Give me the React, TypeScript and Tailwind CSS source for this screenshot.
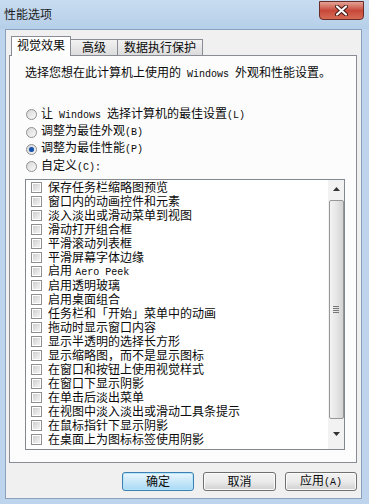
import React from "react";

const cjk = { fontFamily: '"Liberation Sans", "Noto Sans CJK SC", sans-serif' };

// half-width latin, like SimSun's ascii
function L({ children }: { children: React.ReactNode }) {
  return (
    <span className="text-[10px]" style={{ fontFamily: '"Liberation Mono", monospace' }}>
      {children}
    </span>
  );
}

const effects: React.ReactNode[] = [
  "保存任务栏缩略图预览",
  "窗口内的动画控件和元素",
  "淡入淡出或滑动菜单到视图",
  "滑动打开组合框",
  "平滑滚动列表框",
  "平滑屏幕字体边缘",
  <>启用 <L>Aero Peek</L></>,
  "启用透明玻璃",
  "启用桌面组合",
  "任务栏和「开始」菜单中的动画",
  "拖动时显示窗口内容",
  "显示半透明的选择长方形",
  "显示缩略图，而不是显示图标",
  "在窗口和按钮上使用视觉样式",
  "在窗口下显示阴影",
  "在单击后淡出菜单",
  "在视图中淡入淡出或滑动工具条提示",
  "在鼠标指针下显示阴影",
  "在桌面上为图标标签使用阴影",
];

function Radio({ checked, children }: { checked?: boolean; children: React.ReactNode }) {
  return (
    <div className="flex items-center h-[17.4px] gap-[4px]">
      <span className="w-[11px] h-[11px] rounded-full border border-[#8e8f8f] bg-gradient-to-br from-[#d6d6d6] to-[#fbfbfb] flex items-center justify-center">
        {checked && <span className="w-[5px] h-[5px] rounded-full bg-[#1a52a8] shadow-[0_0_1px_#7ab8ef]" />}
      </span>
      <span className="text-[12px] leading-[14px] text-[#0a0a0a]">{children}</span>
    </div>
  );
}

export default function App() {
  return (
    <div className="w-[369px] h-[504px] bg-[#bdd4ec] flex flex-col overflow-hidden" style={cjk}>
      {/* title bar */}
      <div className="h-[29px] flex items-start justify-between pl-[4px] pr-[5px] bg-gradient-to-b from-[#c8dcf0] to-[#b6cfe9]">
        <span className="mt-[8px] text-[12px] leading-[14px] text-[#1b1b1b]">性能选项</span>
        <div className="w-[45px] h-[19px] mt-[1px] rounded-b-[4px] border border-[#6b2b26] bg-gradient-to-b from-[#e3a296] via-[#c7483a] to-[#d66b55] flex items-center justify-center">
          <svg width="13" height="11" viewBox="0 0 13 11">
            <path d="M2 1.5 L11 9.5 M11 1.5 L2 9.5" stroke="#3b1410" strokeWidth="4" strokeLinecap="round" />
            <path d="M2 1.5 L11 9.5 M11 1.5 L2 9.5" stroke="#fff" strokeWidth="2.2" strokeLinecap="round" />
          </svg>
        </div>
      </div>

      {/* client */}
      <div className="flex-1 ml-[5px] mr-[7px] mb-[5px] bg-[#f0f0f0] border border-[#8aa2bf] flex flex-col pl-[3px] pt-[6px]">
        {/* tabs */}
        <div className="flex items-end h-[20px] pl-[2px] relative z-10">
          <div className="w-[60px] h-[20px] border border-[#898c95] border-b-0 bg-white flex items-center justify-center text-[12px] text-[#0a0a0a] pb-[1px]">
            视觉效果
          </div>
          <div className="w-[47px] h-[17px] border border-[#898c95] border-l-0 bg-gradient-to-b from-[#f2f2f2] to-[#dcdcdc] flex items-center justify-center text-[12px] text-[#0a0a0a]">
            高级
          </div>
          <div className="w-[85px] h-[17px] border border-[#898c95] border-l-0 bg-gradient-to-b from-[#f2f2f2] to-[#dcdcdc] flex items-center justify-center text-[12px] text-[#0a0a0a]">
            数据执行保护
          </div>
        </div>

        {/* panel */}
        <div className="w-[348px] h-[408px] -mt-px border border-[#898c95] bg-[#fcfcfc] pl-[15px] pt-[10px] flex flex-col">
          <div className="text-[12px] leading-[14px] text-[#0a0a0a] whitespace-nowrap">
            选择您想在此计算机上使用的<L> Windows </L>外观和性能设置。
          </div>

          <div className="mt-[24px] pl-[1px] flex flex-col">
            <Radio>让<L> Windows </L>选择计算机的最佳设置<L>(L)</L></Radio>
            <Radio>调整为最佳外观<L>(B)</L></Radio>
            <Radio checked>调整为最佳性能<L>(P)</L></Radio>
            <Radio>自定义<L>(C):</L></Radio>
          </div>

          {/* list */}
          <div className="mt-[3px] w-[320px] h-[271px] border border-[#828790] bg-white flex">
            <div className="flex-1 flex flex-col pt-[1px] pl-[5px]">
              {effects.map((e, i) => (
                <div key={i} className="h-[14px] flex items-center gap-[6px]">
                  <span className="w-[11px] h-[11px] border border-[#8f8f8f] p-[1px] bg-white">
                    <span className="block w-full h-full bg-gradient-to-br from-[#cfcfcf] to-[#f4f4f4]" />
                  </span>
                  <span className="text-[12px] leading-[14px] text-[#0a0a0a] whitespace-nowrap">{e}</span>
                </div>
              ))}
            </div>
            {/* scrollbar */}
            <div className="w-[16px] bg-[#f2f2f2] flex flex-col items-center">
              <div className="h-[18px] w-full flex items-center justify-center">
                <svg width="7" height="4" viewBox="0 0 7 4"><path d="M0 4 L3.5 0 L7 4 Z" fill="#333" /></svg>
              </div>
              <div className="w-[15px] h-[219px] mt-[2px] rounded-[2px] border border-[#979797] bg-gradient-to-r from-[#f3f3f3] via-[#e6e6e6] to-[#d3d3d3] flex items-center justify-center">
                <div className="flex flex-col gap-[1px]">
                  <span className="block w-[6px] h-px bg-[#777]" />
                  <span className="block w-[6px] h-px bg-[#777]" />
                  <span className="block w-[6px] h-px bg-[#777]" />
                  <span className="block w-[6px] h-px bg-[#777]" />
                </div>
              </div>
              <div className="flex-1 w-full flex items-center justify-center">
                <svg width="7" height="4" viewBox="0 0 7 4"><path d="M0 0 L3.5 4 L7 0 Z" fill="#333" /></svg>
              </div>
            </div>
          </div>
        </div>

        {/* buttons */}
        <div className="w-[348px] flex justify-end gap-[9px] mt-[9px]">
          <button className="w-[72px] h-[19px] rounded-[3px] border border-[#3c7fb1] bg-gradient-to-b from-[#eaf6fd] to-[#a7d9f5] text-[12px] leading-none text-[#0a0a0a] shadow-[inset_0_0_0_1px_#b6e4fb]">
            确定
          </button>
          <button className="w-[73px] h-[19px] rounded-[3px] border border-[#707070] bg-gradient-to-b from-[#f2f2f2] via-[#ebebeb] to-[#d0d0d0] text-[12px] leading-none text-[#0a0a0a] shadow-[inset_0_0_0_1px_#fbfbfb]">
            取消
          </button>
          <button className="w-[72px] h-[19px] rounded-[3px] border border-[#707070] bg-gradient-to-b from-[#f2f2f2] via-[#ebebeb] to-[#d0d0d0] text-[12px] leading-none text-[#0a0a0a] shadow-[inset_0_0_0_1px_#fbfbfb]">
            应用<L>(A)</L>
          </button>
        </div>
      </div>
    </div>
  );
}
